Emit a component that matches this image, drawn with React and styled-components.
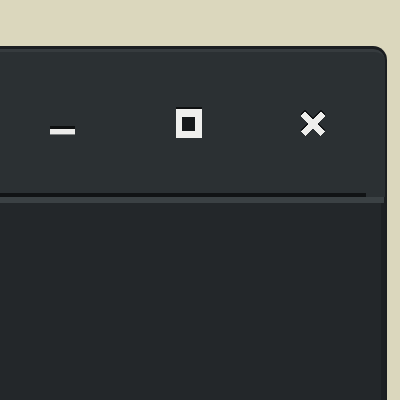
import React from "react";
import styled, { createGlobalStyle } from "styled-components";

const GlobalStyle = createGlobalStyle`
  html, body {
    margin: 0;
    padding: 0;
    background: #dbd7bd;
    font-family: "Liberation Sans", Arial, sans-serif;
  }
`;

const Desktop = styled.div`
  width: 400px;
  height: 400px;
  padding-top: 46px;
  box-sizing: border-box;
  overflow: hidden;
  background: #dbd7bd;
`;

const Window = styled.div`
  width: 387px;
  height: 354px;
  display: flex;
  flex-direction: column;
  background: #1c1f22;
  border-top: 3px solid #1b1e21;
  border-right: 2px solid #1b1e21;
  border-top-right-radius: 14px;
  box-sizing: border-box;
  overflow: hidden;
`;

const TitleBar = styled.div`
  height: 144px;
  flex-shrink: 0;
  display: grid;
  grid-template-columns: repeat(3, 125px);
  align-items: center;
  justify-items: center;
  background: #2b3033;
  border-top: 3px solid #363b3e;
  border-top-right-radius: 11px;
  box-sizing: border-box;
`;

const Separator = styled.div`
  height: 4px;
  flex-shrink: 0;
  background: linear-gradient(to right, #111315 366px, #2b3033 366px);
`;

const Band = styled.div`
  height: 6px;
  flex-shrink: 0;
  margin-right: 1px;
  background: #3b4144;
`;

const Body = styled.div`
  flex: 1;
  background: #23272a;
  border-right: 4px solid #1d2023;
`;

const Button = styled.div`
  width: 30px;
  height: 31px;
  display: flex;
  flex-direction: column;
  align-items: center;
  justify-content: ${(p) => (p.$bottom ? "flex-end" : "center")};
  padding-bottom: ${(p) => (p.$bottom ? "3px" : "0")};
  box-sizing: border-box;
`;

const MinBar = styled.div`
  width: 25px;
  height: 5px;
  background: #ececea;
  border-top: 3px solid #0e1011;
  border-bottom: 1px solid #7b7f80;
`;

const MaxBox = styled.div`
  width: 26px;
  height: 29px;
  margin-top: 2px;
  margin-left: 2px;
  box-sizing: border-box;
  border-style: solid;
  border-color: #efefed;
  border-width: 8px 7px 7px 6px;
  background: #16191b;
  position: relative;

  &::before {
    content: "";
    position: absolute;
    left: -6px;
    right: -7px;
    top: -10px;
    height: 2px;
    background: #0e1011;
  }
`;

const CloseIcon = () => (
  <svg width="28" height="28" viewBox="0 0 28 28" shapeRendering="crispEdges">
    <path d="M4 3 L24 23 M24 3 L4 23" stroke="#111315" strokeWidth="7" />
    <path d="M4 5 L24 25 M24 5 L4 25" stroke="#eeeeec" strokeWidth="7" />
  </svg>
);

export default function App() {
  return (
    <>
      <GlobalStyle />
      <Desktop>
        <Window>
          <TitleBar>
            <Button $bottom>
              <MinBar />
            </Button>
            <Button>
              <MaxBox />
            </Button>
            <Button>
              <CloseIcon />
            </Button>
          </TitleBar>
          <Separator />
          <Band />
          <Body />
        </Window>
      </Desktop>
    </>
  );
}
